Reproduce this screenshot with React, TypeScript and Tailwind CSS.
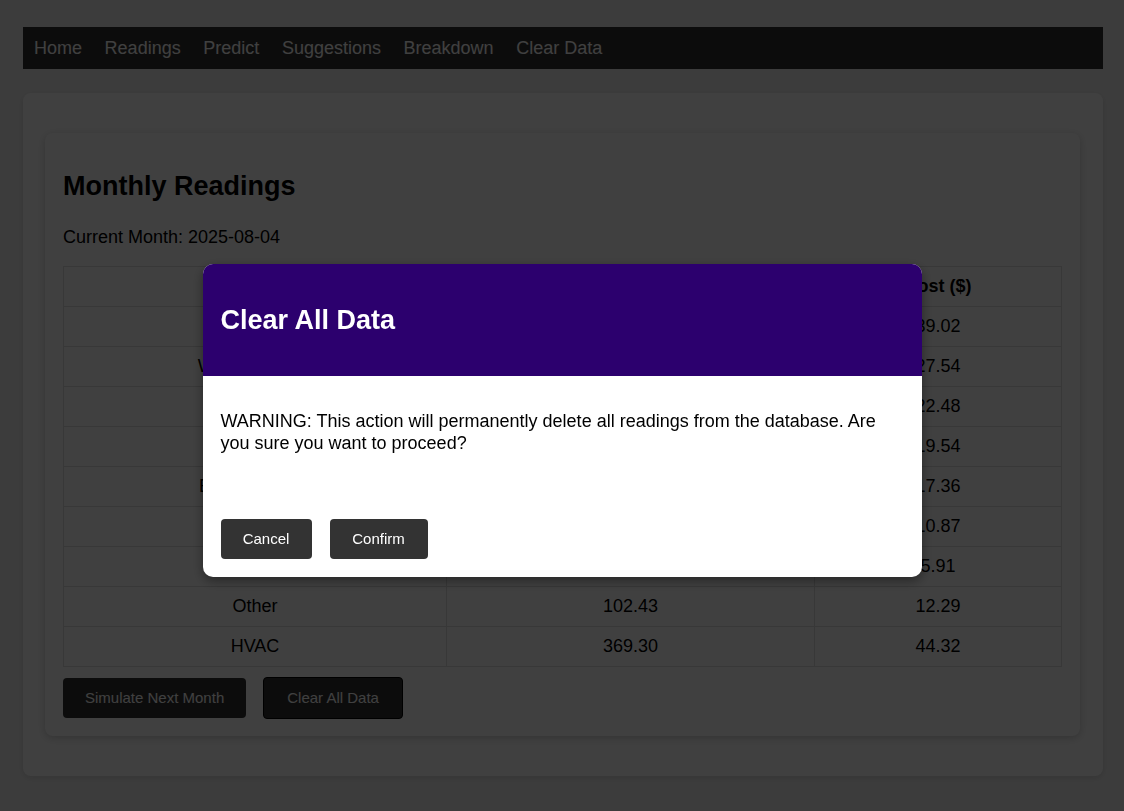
import React from 'react';

interface Reading {
  appliance: string;
  usage: string;
  cost: string;
}

const readings: Reading[] = [
  { appliance: 'Lighting', usage: '325.17', cost: '39.02' },
  { appliance: 'Water Heating', usage: '229.50', cost: '27.54' },
  { appliance: 'Refrigeration', usage: '187.33', cost: '22.48' },
  { appliance: 'Cooking', usage: '162.83', cost: '19.54' },
  { appliance: 'Entertainment', usage: '144.67', cost: '17.36' },
  { appliance: 'Laundry', usage: '90.58', cost: '10.87' },
  { appliance: 'Dishwasher', usage: '49.25', cost: '5.91' },
  { appliance: 'Other', usage: '102.43', cost: '12.29' },
  { appliance: 'HVAC', usage: '369.30', cost: '44.32' },
];

const navLinks = ['Home', 'Readings', 'Predict', 'Suggestions', 'Breakdown', 'Clear Data'];

const ClearDataModal: React.FC = () => (
  <div className="fixed inset-0 bg-black/75 flex justify-center pt-[264px]">
    <div className="w-[719px] h-[313px] bg-white rounded-[10px] overflow-hidden shadow-[0_4px_12px_rgba(0,0,0,0.4)] flex flex-col">
      <div className="h-[112px] bg-[#2c006e] flex items-center px-[18px]">
        <h2 className="text-[27px] font-bold text-white leading-[31px]">Clear All Data</h2>
      </div>
      <div className="px-[18px] pt-[34px]">
        <p className="text-[18px] leading-[22px] text-black">
          WARNING: This action will permanently delete all readings from the database. Are you sure you want to
          proceed?
        </p>
      </div>
      <div className="mt-auto px-[18px] pb-[18px] flex gap-[18px]">
        <button className="w-[91px] h-[40px] bg-[#333] text-white text-[15px] rounded-[4px]">Cancel</button>
        <button className="w-[98px] h-[40px] bg-[#333] text-white text-[15px] rounded-[4px]">Confirm</button>
      </div>
    </div>
  </div>
);

export default function App() {
  return (
    <div className="min-h-screen bg-[#f0f0f0] pl-[23px] pr-[21px] pt-[27px] pb-[35px] text-[18px] text-black font-['Liberation_Sans',Arial,sans-serif]">
      <nav className="h-[42px] bg-[#333] flex items-center pl-[11px] gap-[22.6px]">
        {navLinks.map((link) => (
          <a key={link} href="#" className="text-white text-[18px]">
            {link}
          </a>
        ))}
      </nav>

      <div className="mt-[24px] bg-white rounded-[8px] shadow-[0_2px_6px_rgba(0,0,0,0.12)] pl-[22px] pr-[23px] py-[40px]">
        <div className="bg-white rounded-[8px] shadow-[0_2px_8px_rgba(0,0,0,0.2)] px-[18px] pt-[18px] pb-[17px]">
          <h2 className="text-[27px] font-bold leading-[31px] mt-[20px]">Monthly Readings</h2>
          <p className="mt-[25px] leading-[21px]">Current Month: 2025-08-04</p>

          <table className="mt-[18px] w-full border-collapse">
            <thead>
              <tr className="h-[40px]">
                <th className="w-[383px] border border-[#ddd] font-bold">Appliance</th>
                <th className="w-[368px] border border-[#ddd] font-bold">Usage (kWh)</th>
                <th className="border border-[#ddd] font-bold">Cost ($)</th>
              </tr>
            </thead>
            <tbody>
              {readings.map((r) => (
                <tr key={r.appliance} className="h-[40px]">
                  <td className="border border-[#ddd] text-center">{r.appliance}</td>
                  <td className="border border-[#ddd] text-center">{r.usage}</td>
                  <td className="border border-[#ddd] text-center">{r.cost}</td>
                </tr>
              ))}
            </tbody>
          </table>

          <div className="mt-[10px] flex items-center gap-[17px]">
            <button className="h-[40px] px-[22px] bg-[#333] text-white text-[15px] rounded-[4px]">
              Simulate Next Month
            </button>
            <button className="h-[42px] px-[23px] bg-[#333] text-white text-[15px] rounded-[4px] border border-black">
              Clear All Data
            </button>
          </div>
        </div>
      </div>

      <ClearDataModal />
    </div>
  );
}
